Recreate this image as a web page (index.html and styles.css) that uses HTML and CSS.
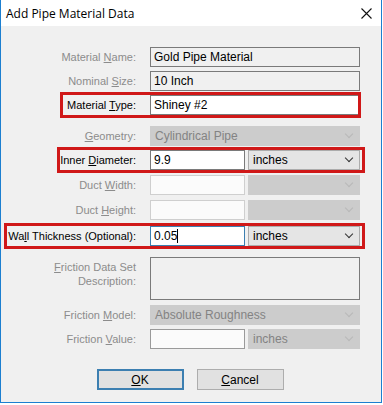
FILE: index.html
```html
<!DOCTYPE html>
<html lang="en">
<head>
    <meta charset="UTF-8">
    <meta name="viewport" content="width=device-width, initial-scale=1.0">
    <title>Add Pipe Material Data</title>
    <link rel="stylesheet" href="styles.css">
</head>
<body>
<div class="window">
    <!-- title bar -->
    <div class="titlebar">
        <span class="title">Add Pipe Material Data</span>
        <svg class="close" width="11" height="11" viewBox="0 0 11 11">
            <path d="M0.5 0.5 L10.5 10.5 M10.5 0.5 L0.5 10.5" stroke="#111" stroke-width="1.1" fill="none"/>
        </svg>
    </div>

    <form class="form">
        <div class="row">
            <label class="off">Material <u>N</u>ame:</label>
            <div class="field readonly">Gold Pipe Material</div>
        </div>
        <div class="row">
            <label class="off">Nominal <u>S</u>ize:</label>
            <div class="field readonly">10 Inch</div>
        </div>
        <div class="row marked mark-type">
            <label>Material <u>T</u>ype:</label>
            <div class="field">Shiney #2</div>
        </div>

        <div class="row space-top">
            <label class="off"><u>G</u>eometry:</label>
            <div class="select disabled">Cylindrical Pipe <span class="arrow"></span></div>
        </div>
        <div class="row marked mark-diam">
            <label>Inner <u>D</u>iameter:</label>
            <div class="split">
                <div class="field">9.9</div>
                <div class="select">inches <span class="arrow"></span></div>
            </div>
        </div>
        <div class="row nudge">
            <label class="off">Duct <u>W</u>idth:</label>
            <div class="split">
                <div class="field empty"></div>
                <div class="select disabled"><span class="arrow"></span></div>
            </div>
        </div>
        <div class="row nudge">
            <label class="off">Duct <u>H</u>eight:</label>
            <div class="split">
                <div class="field empty"></div>
                <div class="select disabled"><span class="arrow"></span></div>
            </div>
        </div>
        <div class="row marked mark-wall nudge-2">
            <label>Wa<u>l</u>l Thickness (Optional):</label>
            <div class="split">
                <div class="field focus">0.05<span class="caret"></span></div>
                <div class="select">inches <span class="arrow"></span></div>
            </div>
        </div>

        <div class="row tall space-top">
            <label class="off"><u>F</u>riction Data Set<br>Description:</label>
            <div class="field memo"></div>
        </div>
        <div class="row nudge">
            <label class="off">Friction <u>M</u>odel:</label>
            <div class="select disabled">Absolute Roughness <span class="arrow"></span></div>
        </div>
        <div class="row">
            <label class="off">Friction <u>V</u>alue:</label>
            <div class="split">
                <div class="field empty light"></div>
                <div class="select disabled">inches <span class="arrow"></span></div>
            </div>
        </div>

        <div class="buttons">
            <button type="button" class="btn default"><u>O</u>K</button>
            <button type="button" class="btn"><u>C</u>ancel</button>
        </div>
    </form>
</div>
</body>
</html>
```

FILE: styles.css
```css
/* dialog window */
body {
    margin: 0;
    background: #ffffff;
    font-family: "Liberation Sans", Arial, sans-serif;
    font-size: 11px;
}

.window {
    box-sizing: border-box;
    width: 382px;
    height: 403px;
    background: #f0f0f0;
    border: 1px solid #1c7fd0;
    border-top: none;
}

.titlebar {
    height: 26px;
    background: #fff;
    display: flex;
    align-items: center;
    justify-content: space-between;
    padding: 0 9px 0 5px;
}

.title {
    font-family: "Open Sans", "Noto Sans", sans-serif;
    font-size: 12px;
    color: #000;
}

/* form rows */
.form {
    display: flex;
    flex-direction: column;
    gap: 4px;
    padding-top: 21px;
}

.row {
    position: relative;
    display: grid;
    grid-template-columns: 135px 210px;
    column-gap: 14px;
    height: 20px;
    align-items: center;
}

.row.tall {
    height: 43px;
    align-items: start;
}

.row.space-top {
    margin-top: 7px;
}

.row.nudge {
    margin-top: 1px;
}

.row.nudge-2 {
    margin-top: 2px;
}

label {
    text-align: right;
    color: #000;
    line-height: 14px;
    white-space: nowrap;
}

label.off {
    color: #8c8c8c;
}

.row.tall label {
    padding-top: 3px;
}

/* text boxes */
.field {
    box-sizing: border-box;
    height: 20px;
    border: 1px solid #7a7a7a;
    background: #fff;
    padding: 0 3px;
    line-height: 18px;
    font-size: 12px;
    color: #000;
}

.field.readonly {
    background: #f0f0f0;
}

.field.empty {
    border-color: #cfcfcf;
    background: #fbfbfb;
}

.field.light {
    border-color: #9a9a9a;
}

.field.focus {
    border-color: #3c7fb1;
}

.field.memo {
    height: 43px;
    background: #f0f0f0;
}

.caret {
    display: inline-block;
    width: 1px;
    height: 14px;
    background: #000;
    vertical-align: -3px;
}

.split {
    display: grid;
    grid-template-columns: 95px 112px;
    column-gap: 3px;
}

/* drop downs */
.select {
    position: relative;
    box-sizing: border-box;
    height: 20px;
    border: 1px solid #acacac;
    background: #e5e5e5;
    padding: 0 4px;
    line-height: 18px;
    font-size: 12px;
    color: #000;
}

.select.disabled {
    background: #cccccc;
    border-color: #cccccc;
    color: #838383;
}

.arrow {
    position: absolute;
    right: 7px;
    top: 4px;
    width: 5px;
    height: 5px;
    border-right: 1px solid #333;
    border-bottom: 1px solid #333;
    transform: rotate(45deg);
}

.select.disabled .arrow {
    border-color: #b8b8b8;
}

/* red annotation boxes */
.marked::after {
    content: "";
    position: absolute;
    top: -3px;
    bottom: -3px;
    border: 3px solid #d01818;
    pointer-events: none;
}

.mark-type::after {
    left: 59px;
    right: 20px;
}

.mark-diam::after {
    left: 56px;
    right: 16px;
}

.mark-wall::after {
    left: 3px;
    right: 16px;
}

/* buttons */
.buttons {
    display: flex;
    justify-content: center;
    gap: 13px;
    margin-top: 16px;
    padding-right: 2px;
}

.btn {
    box-sizing: border-box;
    width: 87px;
    height: 21px;
    border: 1px solid #adadad;
    background: #e1e1e1;
    font-family: "Liberation Sans", Arial, sans-serif;
    font-size: 12px;
    color: #000;
    padding: 0;
}

.btn.default {
    border: 2px solid #3c7fb1;
}
```
